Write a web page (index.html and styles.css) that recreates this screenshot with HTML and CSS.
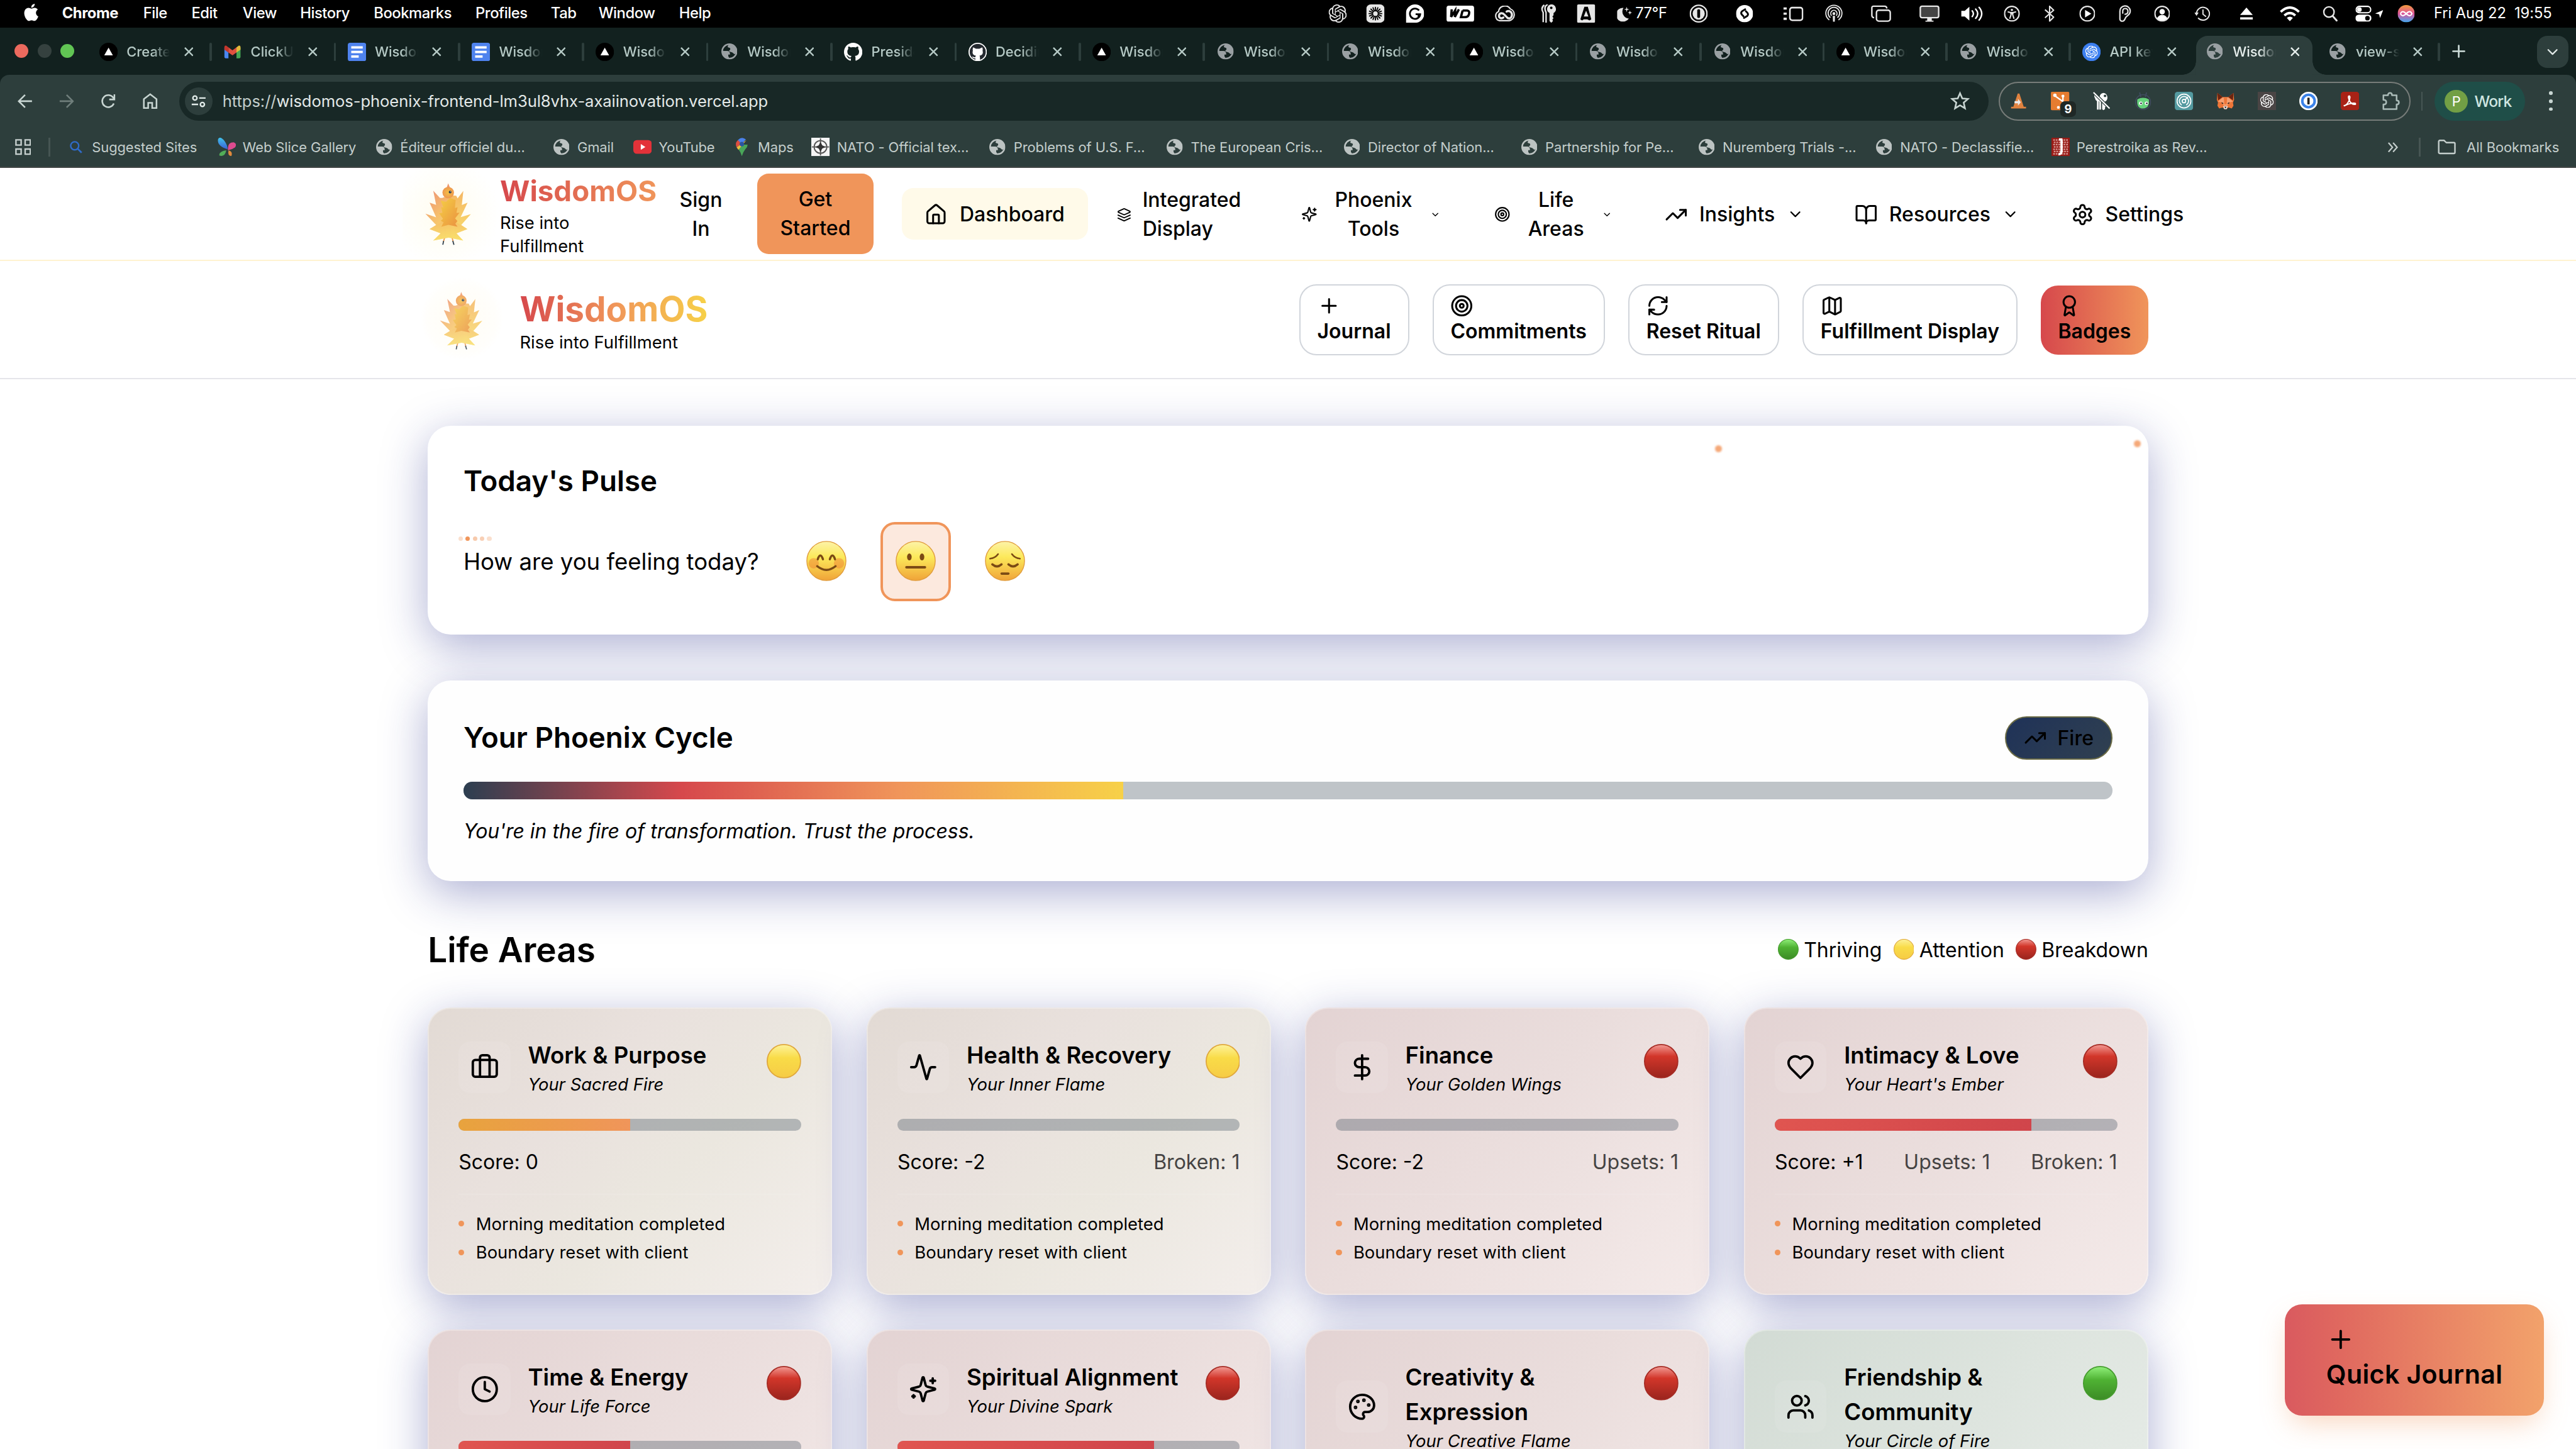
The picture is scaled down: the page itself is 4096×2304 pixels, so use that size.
FILE: index.html
```html
<!DOCTYPE html>
<html lang="en">
<head>
<meta charset="utf-8">
<title>WisdomOS</title>
<link rel="stylesheet" href="styles.css">
</head>
<body>
<svg class="sprite" aria-hidden="true">
  <defs>
    <linearGradient id="g-feather" x1="0" y1="0" x2=".7" y2="1"><stop offset="0" stop-color="#ec8f78"/><stop offset=".5" stop-color="#f6bd6c"/><stop offset="1" stop-color="#f9e06c"/></linearGradient>
    <linearGradient id="g-featherR" x1="0" y1="0" x2="0" y2="1"><stop offset="0" stop-color="#f5b765"/><stop offset="1" stop-color="#f9e06c"/></linearGradient>
    <linearGradient id="g-breast" x1="0" y1="0" x2="1" y2="1"><stop offset="0" stop-color="#f5cf45"/><stop offset="1" stop-color="#ea9040"/></linearGradient>
    <radialGradient id="g-head"><stop offset="0" stop-color="#f4c044"/><stop offset="1" stop-color="#ee9850"/></radialGradient>
    <linearGradient id="g-face" x1="0" y1="0" x2="0" y2="1"><stop offset="0" stop-color="#fdf3a8"/><stop offset=".4" stop-color="#fce95a"/><stop offset="1" stop-color="#f0a338"/></linearGradient>
    <linearGradient id="g-red" x1="0" y1="0" x2="0" y2="1"><stop offset="0" stop-color="#f29a94"/><stop offset=".35" stop-color="#d2362a"/><stop offset="1" stop-color="#99241d"/></linearGradient>
    <linearGradient id="g-yellow" x1="0" y1="0" x2="0" y2="1"><stop offset="0" stop-color="#fdf29a"/><stop offset=".4" stop-color="#f9dc48"/><stop offset="1" stop-color="#f6cb45"/></linearGradient>
    <linearGradient id="g-green" x1="0" y1="0" x2="0" y2="1"><stop offset="0" stop-color="#90f07a"/><stop offset=".4" stop-color="#4fb233"/><stop offset="1" stop-color="#3c8b26"/></linearGradient>
    <linearGradient id="g-siri" x1="0" y1="0" x2="0" y2="1"><stop offset="0" stop-color="#f39b3c"/><stop offset=".5" stop-color="#e0569c"/><stop offset="1" stop-color="#3fa9f0"/></linearGradient>
    <linearGradient id="g-wing" x1="0" y1="0" x2="0" y2="1"><stop offset="0" stop-color="#41c3ea"/><stop offset="1" stop-color="#3a5fd8"/></linearGradient>
  </defs>
  <symbol id="apple" viewBox="0 0 24 24"><path fill="#fff" d="M12.152 6.896c-.948 0-2.415-1.078-3.96-1.04-2.04.027-3.91 1.183-4.961 3.014-2.117 3.675-.546 9.103 1.519 12.09 1.013 1.454 2.208 3.09 3.792 3.039 1.52-.065 2.09-.987 3.935-.987 1.831 0 2.35.987 3.96.948 1.637-.026 2.676-1.48 3.676-2.948 1.156-1.688 1.636-3.325 1.662-3.415-.039-.013-3.182-1.221-3.22-4.857-.026-3.04 2.48-4.494 2.597-4.559-1.429-2.09-3.623-2.324-4.39-2.376-2-.156-3.675 1.09-4.61 1.09zM15.53 3.83c.843-1.012 1.4-2.427 1.245-3.83-1.207.052-2.662.805-3.532 1.818-.78.896-1.454 2.338-1.273 3.714 1.338.104 2.715-.688 3.559-1.701"/></symbol>
  <symbol id="openai" viewBox="0 0 24 24"><path fill="currentColor" d="M22.2819 9.8211a5.9847 5.9847 0 0 0-.5157-4.9108 6.0462 6.0462 0 0 0-6.5098-2.9A6.0651 6.0651 0 0 0 4.9807 4.1818a5.9847 5.9847 0 0 0-3.9977 2.9 6.0462 6.0462 0 0 0 .7427 7.0966 5.98 5.98 0 0 0 .511 4.9107 6.051 6.051 0 0 0 6.5146 2.9001A5.9847 5.9847 0 0 0 13.2599 24a6.0557 6.0557 0 0 0 5.7718-4.2058 5.9894 5.9894 0 0 0 3.9977-2.9001 6.0557 6.0557 0 0 0-.7475-7.0729zm-9.022 12.6081a4.4755 4.4755 0 0 1-2.8764-1.0408l.1419-.0804 4.7783-2.7582a.7948.7948 0 0 0 .3927-.6813v-6.7369l2.02 1.1686a.071.071 0 0 1 .038.052v5.5826a4.504 4.504 0 0 1-4.4945 4.4944zm-9.6607-4.1254a4.4708 4.4708 0 0 1-.5346-3.0137l.142.0852 4.783 2.7582a.7712.7712 0 0 0 .7806 0l5.8428-3.3685v2.3324a.0804.0804 0 0 1-.0332.0615L9.74 19.9502a4.4992 4.4992 0 0 1-6.1408-1.6464zM2.3408 7.8956a4.485 4.485 0 0 1 2.3655-1.9728V11.6a.7664.7664 0 0 0 .3879.6765l5.8144 3.3543-2.0201 1.1685a.0757.0757 0 0 1-.071 0l-4.8303-2.7865A4.504 4.504 0 0 1 2.3408 7.872zm16.5963 3.8558L13.1038 8.364 15.1192 7.2a.0757.0757 0 0 1 .071 0l4.8303 2.7913a4.4944 4.4944 0 0 1-.6765 8.1042v-5.6772a.79.79 0 0 0-.407-.667zm2.0107-3.0231l-.142-.0852-4.7735-2.7818a.7759.7759 0 0 0-.7854 0L9.409 9.2297V6.8974a.0662.0662 0 0 1 .0284-.0615l4.8303-2.7866a4.4992 4.4992 0 0 1 6.6802 4.66zM8.3065 12.863l-2.02-1.1638a.0804.0804 0 0 1-.038-.0567V6.0742a4.4992 4.4992 0 0 1 7.3757-3.4537l-.142.0805L8.704 5.459a.7948.7948 0 0 0-.3927.6813zm1.0976-2.3654l2.602-1.4998 2.6069 1.4998v2.9994l-2.5974 1.4997-2.6067-1.4997Z"/></symbol>
  <symbol id="m-burst" viewBox="0 0 32 32"><rect width="32" height="32" rx="8" fill="#e6e6e6"/><path stroke="#000" stroke-width="2" stroke-linecap="round" d="M16 5v7M16 20v7M5 16h7M20 16h7M8.200 8.200l5 5M18.800 18.800l5 5M23.800 8.200l-5 5M13.200 18.800l-5 5M11.800 5.800l2.700 6.500M17.500 19.700l2.700 6.500M20.200 5.800l-2.700 6.500M14.500 19.700l-2.700 6.500M5.800 11.800l6.500 2.700M19.700 17.500l6.500 2.700M26.200 11.800l-6.500 2.700M12.300 17.500l-6.500 2.700"/><circle cx="16" cy="16" r="4" fill="#e6e6e6"/></symbol>
  <symbol id="m-g" viewBox="0 0 32 32"><path fill="#fff" d="M16 0a16 16 0 1 1 0 32H0V16A16 16 0 0 1 16 0z"/><path fill="none" stroke="#000" stroke-width="3" d="M23 10.500a9 9 0 1 0 2 6.500h-8M22 17v6"/></symbol>
  <symbol id="m-wd" viewBox="0 0 48 28"><rect width="48" height="28" rx="4" fill="#fff"/><path fill="none" stroke="#000" stroke-width="4" d="M9 6.500l-1 13 7-11-.5 11 7-13M28 8.500h8q5 1 3 6.500-1.500 5-7 5h-7l3-11.500"/></symbol>
  <symbol id="m-cc" viewBox="0 0 40 30"><path fill="none" stroke="#e6e6e6" stroke-width="2.500" d="M10 28a9 9 0 0 1-2-17A12 12 0 0 1 30 6a11.500 11.500 0 0 1-2 22z"/><path fill="none" stroke="#e6e6e6" stroke-width="4" stroke-linecap="round" d="M17 22c-3 3-9 1-8-4s7-5 10-1l6 6c4 2 8-1 8-6s-5-9-10-6"/></symbol>
  <symbol id="m-keys" viewBox="0 0 32 32"><path fill="#e6e6e6" d="M21 0a8 8 0 0 1 4 15v4l-2 2 2 3-2 2 1 3-3 3-3-3V15A8 8 0 0 1 21 0z"/><circle cx="21" cy="6" r="2.200" fill="#000"/><path fill="none" stroke="#e6e6e6" stroke-width="2.600" d="M15 0Q7 4 12 14v18M9 1Q2 6 7 14v17"/></symbol>
  <symbol id="m-a" viewBox="0 0 32 32"><rect width="32" height="32" rx="3" fill="#e6e6e6"/><path d="M13 4h6l6 22-3 2-4-2h-6l-3 2-3-2z"/><path fill="#e6e6e6" d="M16 11l4 10h-8z"/></symbol>
  <symbol id="m-moon" viewBox="0 0 28 30"><path fill="#e6e6e6" d="M11 4a13 13 0 1 0 10 20A13 13 0 0 1 11 4z"/><path fill="#e6e6e6" d="M17 2l1 4 4 1-4 1-1 4-1-4-4-1 4-1zM23 9l1 3 3 1-3 1-1 3-1-3-3-1 3-1z"/></symbol>
  <symbol id="m-1p" viewBox="0 0 32 32"><circle cx="16" cy="16" r="14.500" fill="none" stroke="#e6e6e6" stroke-width="2.600"/><circle cx="16" cy="16" r="10.500" fill="#e6e6e6"/><rect x="13.500" y="8.500" width="5" height="15" rx="2" fill="#000"/></symbol>
  <symbol id="m-shz" viewBox="0 0 28 28"><circle cx="14" cy="14" r="14" fill="#fff"/><path fill="none" stroke="#000" stroke-width="3" stroke-linecap="round" d="M15 7l-5 3q-3 3 0 6l2 2M13 21l5-3q3-3 0-6l-2-2"/></symbol>
  <symbol id="m-list" viewBox="0 0 36 28"><rect x="11.500" y="3.500" width="22" height="22" rx="4" fill="none" stroke="#e6e6e6" stroke-width="2.800"/><path stroke="#e6e6e6" stroke-width="4" d="M0 5h6M0 14h6M0 23h6"/></symbol>
  <symbol id="m-air" viewBox="0 0 32 32"><g fill="none" stroke="#e6e6e6" stroke-width="2"><path d="M8 27a14 14 0 1 1 16 0"/><path d="M10 23a10 10 0 1 1 12 0"/><path d="M12 19.500a5.500 5.500 0 1 1 8 0"/></g><circle cx="16" cy="16" r="2.500" fill="#e6e6e6"/><path fill="#e6e6e6" d="M14 20h4l-.500 10h-3z"/></symbol>
  <symbol id="m-stack" viewBox="0 0 36 30"><path fill="none" stroke="#e6e6e6" stroke-width="2.600" d="M6 22a4 4 0 0 1-4-4V5q0-3 3-3h19q4 0 4 4"/><rect x="10" y="9" width="24" height="19" rx="4" fill="none" stroke="#e6e6e6" stroke-width="2.600"/></symbol>
  <symbol id="m-disp" viewBox="0 0 36 30"><rect x="2" y="2" width="32" height="20" rx="3" fill="#444" stroke="#e6e6e6" stroke-width="2.600"/><path fill="#e6e6e6" d="M14 22h8v5h3v2H11v-2h3z"/></symbol>
  <symbol id="m-vol" viewBox="0 0 40 28"><path fill="#fff" d="M1 9h6l8-7v24l-8-7H1z"/><path fill="none" stroke="#fff" stroke-width="2.600" stroke-linecap="round" d="M20 9q4 5 0 10M26 6q7 8 0 16M32 3q9 11 0 22"/></symbol>
  <symbol id="m-acc" viewBox="0 0 28 28"><circle cx="14" cy="14" r="12.700" fill="none" stroke="#e6e6e6" stroke-width="2.400"/><circle cx="14" cy="7.500" r="2" fill="#e6e6e6"/><path fill="none" stroke="#e6e6e6" stroke-width="2.200" stroke-linecap="round" d="M7.500 11l4.500 1h4l4.500-1M12.500 12v4l-2 6M15.500 12v4l2 6M12 14h4"/></symbol>
  <symbol id="m-bt" viewBox="0 0 20 28"><path fill="none" stroke="#e6e6e6" stroke-width="2.300" stroke-linejoin="round" d="M2 7l15 13-7 7V1l7 7L2 21"/></symbol>
  <symbol id="m-play" viewBox="0 0 28 28"><circle cx="14" cy="14" r="12.700" fill="none" stroke="#e6e6e6" stroke-width="2.400"/><path fill="#fff" d="M10 7.500l11 6.500-11 6.500z"/></symbol>
  <symbol id="m-ear" viewBox="0 0 24 30"><path fill="none" stroke="#e6e6e6" stroke-width="2.400" stroke-linecap="round" d="M3 25V11A9 9 0 0 1 21 10c0 9-8 8-9 14q-2 5-6 4q-3-1-3-4M8 14q-1-8 4-8t5 5-5 5"/></symbol>
  <symbol id="m-user" viewBox="0 0 28 28"><circle cx="14" cy="14" r="12.700" fill="none" stroke="#e6e6e6" stroke-width="2.400"/><circle cx="14" cy="10.500" r="4.700" fill="#fff"/><path fill="#fff" d="M5 22q3-6 9-6t9 6q-4 4-9 4t-9-4z"/></symbol>
  <symbol id="m-time" viewBox="0 0 30 28"><path fill="none" stroke="#e6e6e6" stroke-width="2.300" stroke-linecap="round" d="M4 14a12 12 0 1 1 3.500 8.500M16 7v8l5 4"/><path fill="#e6e6e6" d="M0 12h8l-4 6z"/></symbol>
  <symbol id="m-eject" viewBox="0 0 24 24"><path fill="#fff" d="M12 1l11 13H1zM1 18h22v4H1z"/></symbol>
  <symbol id="m-wifi" viewBox="0 0 34 26"><g fill="none" stroke="#fff" stroke-width="4"><path d="M2 10q15-14 30 0"/><path d="M8 16q9-8 18 0"/></g><path fill="#fff" d="M12 20q5-4 10 0l-5 5.500z"/></symbol>
  <symbol id="m-search" viewBox="0 0 28 28"><circle cx="12" cy="11" r="9" fill="none" stroke="#e6e6e6" stroke-width="2.600"/><path stroke="#e6e6e6" stroke-width="3.200" stroke-linecap="round" d="M18.500 18l7 8"/></symbol>
  <symbol id="m-ctl" viewBox="0 0 28 28"><rect x="1.300" y="1.300" width="25.400" height="11" rx="5.500" fill="none" stroke="#fff" stroke-width="2.400"/><circle cx="7" cy="6.800" r="4" fill="#fff"/><rect y="15.500" width="28" height="12.500" rx="6.200" fill="#fff"/><circle cx="21" cy="21.800" r="4" fill="#000"/></symbol>
  <symbol id="m-loc" viewBox="0 0 14 14"><path fill="#fff" d="M14 0L8.500 14 7 7.500 0 6z"/></symbol>
  <symbol id="m-siri" viewBox="0 0 30 30"><circle cx="15" cy="15" r="15" fill="url(#g-siri)"/><path fill="none" stroke="#fff" stroke-width="2.200" d="M5 15q3-7 10 0t10 0q-3-7-10 0t-10 0"/></symbol>
  <symbol id="f-vercel" viewBox="0 0 32 32"><circle cx="16" cy="16" r="16"/><path fill="#fff" d="M16 8.500l7.500 13.500h-15z"/></symbol>
  <symbol id="f-gmail" viewBox="0 0 32 24"><path fill="#4a86f0" d="M2 4v17q0 2 2 2h5V10z"/><path fill="#45a655" d="M30 4v17q0 2-2 2h-5V10z"/><path fill="#e2b93a" d="M23 4l4-3q3-1 3 3v4l-7 5z"/><path fill="#c5362c" d="M2 4q0-4 3-3l4 3v9L2 8z"/><path fill="#e0503f" d="M9 4l7 5 7-5v9l-7 5-7-5z"/></symbol>
  <symbol id="f-docs" viewBox="0 0 32 32"><rect width="32" height="32" rx="4" fill="#4f83ee"/><path stroke="#fff" stroke-width="4" d="M6 8h20M6 16h20M6 24h13"/></symbol>
  <symbol id="globe" viewBox="0 0 28 28"><circle cx="14" cy="14" r="12.600" fill="none" stroke="currentColor" stroke-width="2.800"/><path fill="currentColor" d="M1 13h9c3.500 0 5 2 5 5v1.500h-3v3l3 4.500C7 28 1 22 1 13zM14 1c-1 2-3 2.500-3 4.500 0 2.500 4.500 1 4.500 4 0 2.500-2 2-2 3.500 0 2 4 1.500 6 3 2 1.200 2 2.800 4 2.500 2-.500 3-2.500 3.500-4.500C27 7 21 1 14 1z"/></symbol>
  <symbol id="f-github" viewBox="0 0 16 16"><path fill="#fff" d="M8 0C3.580 0 0 3.580 0 8c0 3.540 2.290 6.530 5.470 7.590.4.070.55-.17.55-.38 0-.19-.01-.82-.01-1.490-2.010.37-2.530-.49-2.690-.94-.09-.23-.48-.94-.82-1.130-.28-.15-.68-.52-.01-.53.63-.01 1.080.58 1.230.82.720 1.210 1.870.87 2.330.66.070-.52.280-.87.510-1.070-1.780-.2-3.640-.89-3.640-3.950 0-.87.310-1.590.820-2.150-.08-.2-.36-1.020.080-2.120 0 0 .67-.21 2.200.82.640-.18 1.320-.27 2-.27s1.360.09 2 .27c1.530-1.040 2.200-.82 2.200-.82.440 1.100.160 1.920.080 2.120.510.560.820 1.270.820 2.150 0 3.070-1.870 3.750-3.650 3.950.29.250.54.730.54 1.480 0 1.070-.01 1.930-.01 2.200 0 .21.15.46.55.38A8.010 8.010 0 0 0 16 8c0-4.420-3.580-8-8-8z"/></symbol>
  <symbol id="f-githubdark" viewBox="0 0 32 32"><circle cx="16" cy="16" r="15" fill="#24292f" stroke="#fff" stroke-width="2"/><path fill="#fff" d="M8 8l5 2.500h6L24 8q1.500 4 .500 6c1.500 5-1 8-5.500 8.500 1 1 1 3 1 8.500h-8v-4c-4 1-5-2-6-3 3-.5 3 2 6 1q0-1.500 1-2.500C8.500 22 6 19 7.500 14q-1-2 .500-6z"/></symbol>
  <symbol id="f-api" viewBox="0 0 32 32"><circle cx="16" cy="16" r="16" fill="#3c7ff0"/><svg x="5" y="5" width="22" height="22" color="#fff"><use href="#openai"/></svg></symbol>
  <symbol id="x" viewBox="0 0 16 16"><path stroke="currentColor" stroke-width="2.600" d="M1 1l14 14M15 1L1 15"/></symbol>
  <symbol id="plus" viewBox="0 0 24 24"><path fill="none" stroke="currentColor" stroke-width="2" stroke-linecap="round" d="M5 12h14M12 5v14"/></symbol>
  <symbol id="chev" viewBox="0 0 24 24"><path fill="none" stroke="currentColor" stroke-width="2" stroke-linecap="round" stroke-linejoin="round" d="M6 9l6 6 6-6"/></symbol>
  <symbol id="back" viewBox="0 0 26 24"><path fill="none" stroke="currentColor" stroke-width="2.800" d="M13 1L2 12l11 11M2 12h23"/></symbol>
  <symbol id="reload" viewBox="0 0 26 26"><path fill="none" stroke="currentColor" stroke-width="2.800" d="M23 17A10.500 10.500 0 1 1 22 7l2 3M24 1v9h-9"/></symbol>
  <symbol id="home" viewBox="0 0 26 28"><path fill="none" stroke="currentColor" stroke-width="2.800" d="M2 10.500L13 2l11 8.500V26h-7.500v-9h-7v9H2z"/></symbol>
  <symbol id="tune" viewBox="0 0 28 24"><g fill="none" stroke="#e2ebe9" stroke-width="2.800"><circle cx="7" cy="6" r="3.800"/><circle cx="21" cy="18" r="3.800"/><path d="M15 6h12M1 18h12"/></g></symbol>
  <symbol id="star" viewBox="0 0 24 24"><path fill="none" stroke="currentColor" stroke-width="2" d="M12 2.500l2.800 6.400 7 .600-5.300 4.600 1.600 6.900L12 17.300 5.900 21l1.600-6.900L2.200 9.500l7-.600z"/></symbol>
  <symbol id="e-vlc" viewBox="0 0 32 32"><path fill="#e0823f" d="M14.500 3h3L25 26h4v3H3v-3h4z"/><path fill="#e9e9e9" d="M9 16h6v-4l5 6-5 6v-4H9z"/></symbol>
  <symbol id="e-hub" viewBox="0 0 44 48"><rect width="32" height="32" rx="2" fill="#e67c30"/><path fill="none" stroke="#fff" stroke-width="2.600" d="M7 7l14 10V8"/><circle cx="7" cy="6" r="3" fill="#fff"/><circle cx="21" cy="7.500" r="2.600" fill="#fff"/><circle cx="13" cy="27" r="2.500" fill="#fff"/></symbol>
  <symbol id="e-keys" viewBox="0 0 32 32"><path fill="#fff" d="M19 2a8 8 0 0 1 3 15v4l2 3-2 3v3l-3 2-2-2V17A8 8 0 0 1 19 2zM5 12q0 3 3 4v15h3V17l1-1v15h3V14L4 3q-2 4 1 9z"/><circle cx="22" cy="7" r="2.200" fill="#2d3e3c"/><path stroke="#2d3e3c" stroke-width="5" d="M2 1l28 28"/><path stroke="#fff" stroke-width="2.400" d="M2 1l28 28"/></symbol>
  <symbol id="e-bot" viewBox="0 0 32 32"><circle cx="16" cy="18" r="13" fill="none" stroke="#414c60" stroke-width="1.600"/><path stroke="#414c60" stroke-width="2" d="M10 1l2 8M22 1l-2 8"/><path fill="#68d47e" d="M6 13q10-5 20 0 2 15-10 16Q4 29 6 13z"/><circle cx="12" cy="20" r="3" fill="#fff"/><circle cx="22" cy="20" r="3" fill="#fff"/><circle cx="12.500" cy="20" r="1.500" fill="#334"/><circle cx="22.500" cy="20" r="1.500" fill="#334"/></symbol>
  <symbol id="e-gauge" viewBox="0 0 32 32"><rect width="32" height="32" rx="5" fill="#549aa0"/><g fill="none" stroke="#fff" stroke-width="1.900"><circle cx="16" cy="16" r="12"/><path d="M12 23a8 8 0 1 1 8 0"/><circle cx="16" cy="16" r="3"/><path d="M18 14l5-5"/></g></symbol>
  <symbol id="e-fox" viewBox="0 0 32 32"><path fill="#ee7638" d="M2 2l9 7h10l9-7 1 12-2 5 1 5-3 5-6-2-3 3h-4l-3-3-6 2-3-5 1-5-2-5z"/><path fill="#6b2410" d="M2 2l9 7-8 6zM30 2l-9 7 8 6z"/><path fill="#f6a071" d="M3 17l8-7h10l8 7-8 2-2 5h-6l-2-5z"/><path fill="#ee7638" d="M13 10h6l-1 12h-4z"/><path fill="#eee" d="M12 25h8l-2 5h-4z"/><path fill="#222" d="M14 26h4l-2 3zM9 18l4 2-3 1zM23 18l-4 2 3 1z"/></symbol>
  <symbol id="e-gpt" viewBox="0 0 32 32"><rect width="32" height="32" fill="#4a4545"/><svg x="4" y="4" width="24" height="24" color="#fff"><use href="#openai"/></svg></symbol>
  <symbol id="e-1p" viewBox="0 0 32 32"><circle cx="16" cy="16" r="16" fill="#fff"/><circle cx="16" cy="16" r="13" fill="#3b82e8"/><circle cx="16" cy="16" r="8.500" fill="#fff"/><rect x="14" y="10" width="4" height="12" rx="1" fill="#222"/></symbol>
  <symbol id="e-pdf" viewBox="0 0 32 32"><rect width="32" height="32" rx="5" fill="#a92216"/><path fill="none" stroke="#fff" stroke-width="2.200" d="M6 24q5-1 9-10 2-7-.500-7t0 7q3 8 10 8 2-.500.500-2-6-1-16 3-3 2-3 1z"/></symbol>
  <symbol id="e-puzzle" viewBox="0 0 32 32"><path fill="none" stroke="#a9bab7" stroke-width="2.800" stroke-linejoin="round" d="M3 6h8q0-4 3.500-4T18 6h8v9q4 0 4 3.500T26 22v8H3v-8q5 0 5-4t-5-4z"/></symbol>
  <symbol id="b-grid" viewBox="0 0 28 28"><g fill="none" stroke="#c6d0ce" stroke-width="2.600"><path d="M1.500 1.500h9v9h-9zM17.500 1.500h9v9h-9zM1.500 17.500h9v9h-9zM17.500 17.500h9v9h-9z"/></g></symbol>
  <symbol id="b-search" viewBox="0 0 32 32"><circle cx="14" cy="14" r="7" fill="none" stroke="#2f6bc8" stroke-width="2.600"/><path stroke="#2f6bc8" stroke-width="3" d="M19 19l7 7"/></symbol>
  <symbol id="b-fly" viewBox="0 0 32 32"><path fill="url(#g-wing)" d="M17 20Q-2 14 1 2 5-4 13 7q5 8 4 13z"/><path fill="#dd4b8f" d="M18 18q0-10 10-10 7 3 2 9-5 4-12 5z"/><path fill="#52ad58" d="M15 22Q2 24 3 31q10 3 12-9z"/><path fill="#e08a3c" d="M19 22q8 2 5 10-7 0-5-10z"/></symbol>
  <symbol id="b-yt" viewBox="0 0 32 24"><rect width="32" height="24" rx="6" fill="#e33239"/><path fill="#fff" d="M13 7l8 5-8 5z"/></symbol>
  <symbol id="b-map" viewBox="0 0 24 32"><path fill="#49a659" d="M2 12q0 4 4 8 4 5 6 12 2-7 6-12 4-4 4-8z"/><path fill="#4b82ea" d="M5 4Q12-3 19 3l-8 9z"/><path fill="#dd4d40" d="M5 4l6 6-8 7Q-1 10 5 4z"/><path fill="#efbb3e" d="M3 17L20 4 6 21z"/><circle cx="12" cy="11" r="4" fill="#2b55a0"/></symbol>
  <symbol id="b-nato" viewBox="0 0 32 32"><rect width="32" height="32" fill="#f5f5f5"/><g fill="none" stroke="#555" stroke-width="2"><circle cx="16" cy="16" r="11"/><path d="M16 1v30M1 16h30"/></g><path fill="#333" d="M16 7l3 6 6 3-6 3-3 6-3-6-6-3 6-3z"/></symbol>
  <symbol id="b-j" viewBox="0 0 32 32"><rect width="32" height="32" fill="#971a15"/><path stroke="#d79a96" stroke-width="2.400" stroke-dasharray="3 1.500" d="M3 4h26M4 8h25M3 12h26M4 16h25M3 20h26M4 24h25M3 28h26"/><path fill="none" stroke="#fff" stroke-width="4" d="M13 3h6M17.500 3v20q0 6-5.500 5.500"/></symbol>
  <symbol id="b-more" viewBox="0 0 20 18"><path fill="none" stroke="currentColor" stroke-width="2.400" d="M2 1l7 8-7 8M10 1l7 8-7 8"/></symbol>
  <symbol id="b-folder" viewBox="0 0 34 28"><path fill="none" stroke="currentColor" stroke-width="2.800" stroke-linejoin="round" d="M2 4q0-2 2-2h8l4 4h14q2 0 2 2v16q0 2-2 2H4q-2 0-2-2z"/></symbol>

  <symbol id="phoenix" viewBox="0 0 360 450">
    <path fill="none" stroke="#ee9850" stroke-width="6" d="M146 336l-8 26M182 336l7 26"/><path fill="none" stroke="#33424f" stroke-width="6" d="M139 358l-4 20M187 358l6 20"/>
    <path fill="url(#g-featherR)" d="M165 120l40 2 7 14 30-39-8 74 30-13-36 76 53-16-50 57 32 21-57 22 35 38-76-16z"/>
    <path fill="url(#g-feather)" d="M165 120l-33 14-12 0-35-38 15 74-34-12 34 77-56-19 56 59-34 21 58 22-39 38 80-16 40 0z"/>
    <path fill="url(#g-featherR)" d="M66 296l100-60 97 60-57 22 35 38-75-15-81 15 38-38z" opacity=".75"/>
    <path fill="url(#g-breast)" d="M124 148l28 6 20-20 30 10-4 42 14-4-6 30 16-1-23 29 12 14-11 14 12 16-48-10-37 10 12-23-15-8 12-10-20-29 17-3-7-30 12 2z"/>
    <path fill="#ef9a6c" d="M163 57l14 34h-26z"/><circle cx="163" cy="106" r="30" fill="url(#g-head)"/><circle cx="173" cy="103" r="7" fill="#2c3e50"/><circle cx="175" cy="101" r="2" fill="#e8e8e8"/>
  </symbol>

  <symbol id="l-home" viewBox="0 0 24 24"><path d="M15 21v-8a1 1 0 0 0-1-1h-4a1 1 0 0 0-1 1v8"/><path d="M3 10a2 2 0 0 1 .709-1.528l7-5.999a2 2 0 0 1 2.582 0l7 5.999A2 2 0 0 1 21 10v9a2 2 0 0 1-2 2H5a2 2 0 0 1-2-2z"/></symbol>
  <symbol id="l-layers" viewBox="0 0 24 24"><path d="m12.830 2.180a2 2 0 0 0-1.660 0L2.600 6.080a1 1 0 0 0 0 1.830l8.580 3.910a2 2 0 0 0 1.660 0l8.580-3.900a1 1 0 0 0 0-1.830Z"/><path d="m22 17.650-9.170 4.160a2 2 0 0 1-1.660 0L2 17.650"/><path d="m22 12.650-9.170 4.160a2 2 0 0 1-1.660 0L2 12.650"/></symbol>
  <symbol id="l-sparkles" viewBox="0 0 24 24"><path d="M9.937 15.500A2 2 0 0 0 8.500 14.063l-6.135-1.582a.5.5 0 0 1 0-.962L8.500 9.936A2 2 0 0 0 9.937 8.500l1.582-6.135a.5.5 0 0 1 .963 0L14.063 8.500A2 2 0 0 0 15.500 9.937l6.135 1.581a.5.5 0 0 1 0 .964L15.500 14.063a2 2 0 0 0-1.437 1.437l-1.582 6.135a.5.5 0 0 1-.963 0z"/><path d="M20 3v4M22 5h-4M4 17v2M5 18H3"/></symbol>
  <symbol id="l-target" viewBox="0 0 24 24"><circle cx="12" cy="12" r="10"/><circle cx="12" cy="12" r="6"/><circle cx="12" cy="12" r="2"/></symbol>
  <symbol id="l-trend" viewBox="0 0 24 24"><path d="M22 7l-8.500 8.500-5-5L2 17"/><path d="M16 7h6v6"/></symbol>
  <symbol id="l-book" viewBox="0 0 24 24"><path d="M12 7v14"/><path d="M3 18a1 1 0 0 1-1-1V4a1 1 0 0 1 1-1h5a4 4 0 0 1 4 4 4 4 0 0 1 4-4h5a1 1 0 0 1 1 1v13a1 1 0 0 1-1 1h-6a3 3 0 0 0-3 3 3 3 0 0 0-3-3z"/></symbol>
  <symbol id="l-gear" viewBox="0 0 24 24"><path d="M12.220 2h-.44a2 2 0 0 0-2 2v.18a2 2 0 0 1-1 1.730l-.43.250a2 2 0 0 1-2 0l-.15-.08a2 2 0 0 0-2.730.73l-.22.38a2 2 0 0 0 .73 2.730l.15.100a2 2 0 0 1 1 1.720v.51a2 2 0 0 1-1 1.740l-.15.090a2 2 0 0 0-.73 2.730l.22.380a2 2 0 0 0 2.730.730l.15-.08a2 2 0 0 1 2 0l.43.250a2 2 0 0 1 1 1.730V20a2 2 0 0 0 2 2h.44a2 2 0 0 0 2-2v-.18a2 2 0 0 1 1-1.730l.43-.25a2 2 0 0 1 2 0l.15.080a2 2 0 0 0 2.730-.73l.22-.39a2 2 0 0 0-.73-2.730l-.15-.08a2 2 0 0 1-1-1.740v-.5a2 2 0 0 1 1-1.740l.15-.09a2 2 0 0 0 .73-2.730l-.22-.38a2 2 0 0 0-2.730-.73l-.15.080a2 2 0 0 1-2 0l-.43-.25a2 2 0 0 1-1-1.730V4a2 2 0 0 0-2-2z"/><circle cx="12" cy="12" r="3"/></symbol>
  <symbol id="l-refresh" viewBox="0 0 24 24"><path d="M3 12a9 9 0 0 1 9-9 9.750 9.750 0 0 1 6.740 2.740L21 8"/><path d="M21 3v5h-5"/><path d="M21 12a9 9 0 0 1-9 9 9.750 9.750 0 0 1-6.740-2.740L3 16"/><path d="M8 16H3v5"/></symbol>
  <symbol id="l-map" viewBox="0 0 24 24"><path d="M14.106 5.553a2 2 0 0 0 1.788 0l3.659-1.830A1 1 0 0 1 21 4.619v12.764a1 1 0 0 1-.553.894l-4.553 2.277a2 2 0 0 1-1.788 0l-4.212-2.106a2 2 0 0 0-1.788 0l-3.659 1.830A1 1 0 0 1 3 19.381V6.618a1 1 0 0 1 .553-.894l4.553-2.277a2 2 0 0 1 1.788 0z"/><path d="M15 5.764v15M9 3.236v15"/></symbol>
  <symbol id="l-award" viewBox="0 0 24 24"><path d="m15.477 12.890 1.515 8.526a.5.5 0 0 1-.81.47l-3.580-2.687a1 1 0 0 0-1.197 0l-3.586 2.686a.5.5 0 0 1-.81-.469l1.514-8.526"/><circle cx="12" cy="8" r="6"/></symbol>
  <symbol id="l-bag" viewBox="0 0 24 24"><path d="M16 20V4a2 2 0 0 0-2-2h-4a2 2 0 0 0-2 2v16"/><rect x="2" y="6" width="20" height="14" rx="2"/></symbol>
  <symbol id="l-pulse" viewBox="0 0 24 24"><path d="M22 12h-2.480a2 2 0 0 0-1.930 1.460l-2.350 8.360a.25.25 0 0 1-.48 0L9.240 2.180a.25.25 0 0 0-.48 0l-2.350 8.360A2 2 0 0 1 4.490 12H2"/></symbol>
  <symbol id="l-dollar" viewBox="0 0 24 24"><path d="M12 2v20M17 5H9.500a3.500 3.500 0 0 0 0 7h5a3.500 3.500 0 0 1 0 7H6"/></symbol>
  <symbol id="l-heart" viewBox="0 0 24 24"><path d="M19 14c1.490-1.460 3-3.210 3-5.500A5.500 5.500 0 0 0 16.500 3c-1.760 0-3 .5-4.500 2-1.500-1.500-2.740-2-4.500-2A5.500 5.500 0 0 0 2 8.500c0 2.300 1.500 4.050 3 5.500l7 7Z"/></symbol>
  <symbol id="l-clock" viewBox="0 0 24 24"><circle cx="12" cy="12" r="10"/><path d="M12 6v6l4 2"/></symbol>
  <symbol id="l-palette" viewBox="0 0 24 24"><g fill="#000"><circle cx="13.500" cy="6.500" r=".5"/><circle cx="17.500" cy="10.500" r=".5"/><circle cx="8.500" cy="7.500" r=".5"/><circle cx="6.500" cy="12.500" r=".5"/></g><path d="M12 2C6.500 2 2 6.500 2 12s4.500 10 10 10c.926 0 1.648-.746 1.648-1.688 0-.437-.18-.835-.437-1.125-.29-.289-.438-.652-.438-1.125a1.640 1.640 0 0 1 1.668-1.668h1.996c3.051 0 5.555-2.503 5.555-5.554C21.965 6.012 17.461 2 12 2z"/></symbol>
  <symbol id="l-users" viewBox="0 0 24 24"><path d="M16 21v-2a4 4 0 0 0-4-4H6a4 4 0 0 0-4 4v2"/><circle cx="9" cy="7" r="4"/><path d="M22 21v-2a4 4 0 0 0-3-3.870M16 3.130a4 4 0 0 1 0 7.750"/></symbol>

  <symbol id="dot-red" viewBox="0 0 60 60"><circle cx="30" cy="30" r="29" fill="url(#g-red)" stroke="#a52b24" stroke-width="2"/></symbol>
  <symbol id="dot-yellow" viewBox="0 0 60 60"><circle cx="30" cy="30" r="29" fill="url(#g-yellow)" stroke="#e0a83c" stroke-width="2"/></symbol>
  <symbol id="dot-green" viewBox="0 0 60 60"><circle cx="30" cy="30" r="29" fill="url(#g-green)" stroke="#469c2e" stroke-width="2"/></symbol>
  <symbol id="em-happy" viewBox="0 0 70 70"><circle cx="35" cy="35" r="34" fill="url(#g-face)" stroke="#e09c3c" stroke-width="1.500"/><circle cx="13" cy="39" r="9" fill="#ee7a30" opacity=".45"/><circle cx="57" cy="39" r="9" fill="#ee7a30" opacity=".45"/><path fill="none" stroke="#7b4a14" stroke-width="3.800" stroke-linecap="round" d="M20 32q4.500-13 9 0M41 32q4.500-13 9 0M19 44q16 13 32 0"/></symbol>
  <symbol id="em-flat" viewBox="0 0 70 70"><circle cx="35" cy="35" r="34" fill="url(#g-face)" stroke="#e09c3c" stroke-width="1.500"/><ellipse cx="24" cy="28" rx="4" ry="6" fill="#7b4a14"/><ellipse cx="46" cy="28" rx="4" ry="6" fill="#7b4a14"/><path stroke="#7b4a14" stroke-width="4.500" stroke-linecap="round" d="M19 46h32"/></symbol>
  <symbol id="em-sad" viewBox="0 0 70 70"><circle cx="35" cy="35" r="34" fill="url(#g-face)" stroke="#e09c3c" stroke-width="1.500"/><path fill="none" stroke="#7b4a14" stroke-width="2.800" stroke-linecap="round" d="M9 31q9-1 14-8M61 31q-9-1-14-8"/><path fill="none" stroke="#7b4a14" stroke-width="4" stroke-linecap="round" d="M13 41q8 7 16 0M41 41q8 7 16 0M29 57h12"/></symbol>
</svg>

<div class="screen">
  <div class="menubar">
    <nav class="menubar-apps">
      <svg class="apple"><use href="#apple"/></svg><b>Chrome</b><span>File</span><span>Edit</span><span>View</span><span>History</span><span>Bookmarks</span><span>Profiles</span><span>Tab</span><span>Window</span><span>Help</span>
    </nav>
    <div class="menubar-status">
      <svg class="i32"><use href="#openai"/></svg><svg class="i32"><use href="#m-burst"/></svg><svg class="i32"><use href="#m-g"/></svg><svg class="i48"><use href="#m-wd"/></svg><svg class="i40"><use href="#m-cc"/></svg><svg class="i32"><use href="#m-keys"/></svg><svg class="i32"><use href="#m-a"/></svg><svg class="i28"><use href="#m-moon"/></svg><span>77°F</span><svg class="i32"><use href="#m-1p"/></svg><svg class="i30"><use href="#m-shz"/></svg><svg class="i36"><use href="#m-list"/></svg><svg class="i32"><use href="#m-air"/></svg><svg class="i36"><use href="#m-stack"/></svg><svg class="i36"><use href="#m-disp"/></svg><svg class="i40"><use href="#m-vol"/></svg><svg class="i28"><use href="#m-acc"/></svg><svg class="i28"><use href="#m-bt"/></svg><svg class="i28"><use href="#m-play"/></svg><svg class="i30"><use href="#m-ear"/></svg><svg class="i28"><use href="#m-user"/></svg><svg class="i28"><use href="#m-time"/></svg><svg class="i24"><use href="#m-eject"/></svg><svg class="i36"><use href="#m-wifi"/></svg><svg class="i28"><use href="#m-search"/></svg><svg class="i28"><use href="#m-ctl"/></svg><svg class="i14"><use href="#m-loc"/></svg><svg class="i30"><use href="#m-siri"/></svg><span class="clock">Fri Aug 22&nbsp; 19:55</span>
    </div>
  </div>

  <div class="tabstrip">
    <div class="lights"><i class="red"></i><i class="grey"></i><i class="green"></i></div>
    <div class="tab"><svg><use href="#f-vercel"/></svg><span>Create</span><svg class="x"><use href="#x"/></svg></div>
    <div class="tab"><svg class="i28"><use href="#f-gmail"/></svg><span>ClickUp</span><svg class="x"><use href="#x"/></svg></div>
    <div class="tab"><svg><use href="#f-docs"/></svg><span>Wisdom</span><svg class="x"><use href="#x"/></svg></div>
    <div class="tab"><svg><use href="#f-docs"/></svg><span>Wisdom</span><svg class="x"><use href="#x"/></svg></div>
    <div class="tab"><svg><use href="#f-vercel"/></svg><span>Wisdom</span><svg class="x"><use href="#x"/></svg></div>
    <div class="tab"><svg class="gl"><use href="#globe"/></svg><span>Wisdom</span><svg class="x"><use href="#x"/></svg></div>
    <div class="tab"><svg><use href="#f-github"/></svg><span>Preside</span><svg class="x"><use href="#x"/></svg></div>
    <div class="tab"><svg><use href="#f-githubdark"/></svg><span>Decidin</span><svg class="x"><use href="#x"/></svg></div>
    <div class="tab"><svg><use href="#f-vercel"/></svg><span>Wisdom</span><svg class="x"><use href="#x"/></svg></div>
    <div class="tab"><svg class="gl"><use href="#globe"/></svg><span>Wisdom</span><svg class="x"><use href="#x"/></svg></div>
    <div class="tab"><svg class="gl"><use href="#globe"/></svg><span>Wisdom</span><svg class="x"><use href="#x"/></svg></div>
    <div class="tab"><svg><use href="#f-vercel"/></svg><span>Wisdom</span><svg class="x"><use href="#x"/></svg></div>
    <div class="tab"><svg class="gl"><use href="#globe"/></svg><span>Wisdom</span><svg class="x"><use href="#x"/></svg></div>
    <div class="tab narrow"><svg class="gl"><use href="#globe"/></svg><span>Wisdom</span><svg class="x"><use href="#x"/></svg></div>
    <div class="tab narrow"><svg><use href="#f-vercel"/></svg><span>Wisdom</span><svg class="x"><use href="#x"/></svg></div>
    <div class="tab narrow"><svg class="gl"><use href="#globe"/></svg><span>Wisdom</span><svg class="x"><use href="#x"/></svg></div>
    <div class="tab narrow plain"><svg><use href="#f-api"/></svg><span>API keys</span><svg class="x"><use href="#x"/></svg></div>
    <div class="tab narrow plain active"><svg class="gl"><use href="#globe"/></svg><span>Wisdom</span><svg class="x"><use href="#x"/></svg></div>
    <div class="tab narrow"><svg class="gl"><use href="#globe"/></svg><span>view-so</span><svg class="x"><use href="#x"/></svg></div>
    <svg class="newtab"><use href="#plus"/></svg>
    <div class="tabsearch"><svg><use href="#chev"/></svg></div>
  </div>

  <div class="chrome-back">
  <div class="chrome">
    <div class="toolbar">
      <div class="navbtns"><svg class="i26"><use href="#back"/></svg><svg class="i26 fwd"><use href="#back"/></svg><svg class="i26"><use href="#reload"/></svg><svg class="i28"><use href="#home"/></svg></div>
      <div class="omnibox"><div class="site"><svg><use href="#tune"/></svg></div><span class="url"><i>https://</i>wisdomos-phoenix-frontend-lm3ul8vhx-axaiinovation.vercel.app</span><svg class="star"><use href="#star"/></svg></div>
      <div class="exts">
        <svg><use href="#e-vlc"/></svg>
        <div class="ext-count"><svg><use href="#e-hub"/></svg><b>9</b></div>
        <svg><use href="#e-keys"/></svg><svg><use href="#e-bot"/></svg><svg><use href="#e-gauge"/></svg><svg><use href="#e-fox"/></svg><svg><use href="#e-gpt"/></svg><svg><use href="#e-1p"/></svg><svg><use href="#e-pdf"/></svg><svg><use href="#e-puzzle"/></svg>
      </div>
      <i class="vsep"></i>
      <div class="profile"><b>P</b><span>Work</span></div>
      <div class="kebab"><i></i><i></i><i></i></div>
    </div>
    <div class="bookmarks">
      <svg class="apps"><use href="#b-grid"/></svg><i class="vsep"></i>
      <span><svg><use href="#b-search"/></svg>Suggested Sites</span>
      <span><svg><use href="#b-fly"/></svg>Web Slice Gallery</span>
      <span><svg class="gl"><use href="#globe"/></svg>Éditeur officiel du...</span>
      <span><svg class="gl"><use href="#globe"/></svg>Gmail</span>
      <span><svg><use href="#b-yt"/></svg>YouTube</span>
      <span><svg><use href="#b-map"/></svg>Maps</span>
      <span><svg><use href="#b-nato"/></svg>NATO - Official tex...</span>
      <span><svg class="gl"><use href="#globe"/></svg>Problems of U.S. F...</span>
      <span><svg class="gl"><use href="#globe"/></svg>The European Cris...</span>
      <span><svg class="gl"><use href="#globe"/></svg>Director of Nation...</span>
      <span><svg class="gl"><use href="#globe"/></svg>Partnership for Pe...</span>
      <span><svg class="gl"><use href="#globe"/></svg>Nuremberg Trials -...</span>
      <span><svg class="gl"><use href="#globe"/></svg>NATO - Declassifie...</span>
      <span><svg><use href="#b-j"/></svg>Perestroika as Rev...</span>
      <svg class="more"><use href="#b-more"/></svg><i class="vsep"></i>
      <span class="all"><svg><use href="#b-folder"/></svg>All Bookmarks</span>
    </div>
  </div>
  </div>

  <div class="page">
    <header class="topnav">
      <div class="halo"><svg class="bird"><use href="#phoenix"/></svg></div>
      <div class="brand"><strong>WisdomOS</strong><span>Rise into Fulfillment</span></div>
      <a class="signin">Sign In</a>
      <a class="cta">Get Started</a>
      <a class="item current"><svg class="ic"><use href="#l-home"/></svg>Dashboard</a>
      <a class="item tight"><svg class="ic c24"><use href="#l-layers"/></svg><span>Integrated<br>Display</span></a>
      <a class="item mid"><svg class="ic c28"><use href="#l-sparkles"/></svg><span>Phoenix<br>Tools</span><svg class="ic c18"><use href="#chev"/></svg></a>
      <a class="item mid areas"><svg class="ic c28"><use href="#l-target"/></svg><span>Life<br>Areas</span><svg class="ic c18"><use href="#chev"/></svg></a>
      <a class="item"><svg class="ic"><use href="#l-trend"/></svg><span>Insights</span><svg class="ic c30"><use href="#chev"/></svg></a>
      <a class="item"><svg class="ic"><use href="#l-book"/></svg><span>Resources</span><svg class="ic c30"><use href="#chev"/></svg></a>
      <a class="item"><svg class="ic"><use href="#l-gear"/></svg><span>Settings</span></a>
    </header>

    <header class="subnav">
      <div class="halo"><svg class="bird"><use href="#phoenix"/></svg></div>
      <div class="brand"><strong>WisdomOS</strong><span>Rise into Fulfillment</span></div>
      <div class="actions">
        <button><svg class="ic"><use href="#plus"/></svg>Journal</button>
        <button><svg class="ic"><use href="#l-target"/></svg>Commitments</button>
        <button><svg class="ic"><use href="#l-refresh"/></svg>Reset Ritual</button>
        <button><svg class="ic"><use href="#l-map"/></svg>Fulfillment Display</button>
        <button class="hot"><svg class="ic"><use href="#l-award"/></svg>Badges</button>
      </div>
    </header>

    <main>
      <section class="panel pulse">
        <i class="spark s1"></i><i class="spark s2"></i>
        <div class="embers"><i></i><i></i><i></i><i></i><i></i></div>
        <h2>Today's Pulse</h2>
        <div class="mood"><p>How are you feeling today?</p>
          <div class="face"><svg><use href="#em-happy"/></svg></div><div class="face on"><svg><use href="#em-flat"/></svg></div><div class="face"><svg><use href="#em-sad"/></svg></div>
        </div>
      </section>

      <section class="panel cycle">
        <div class="row"><h2>Your Phoenix Cycle</h2><div class="phase"><svg class="ic"><use href="#l-trend"/></svg>Fire</div></div>
        <div class="meter"><div style="width:40%"></div></div>
        <p>You're in the fire of transformation. Trust the process.</p>
      </section>

      <div class="areas-head"><h1>Life Areas</h1>
        <div class="legend"><span><svg><use href="#dot-green"/></svg>Thriving</span><span><svg><use href="#dot-yellow"/></svg>Attention</span><span><svg><use href="#dot-red"/></svg>Breakdown</span></div>
      </div>

      <div class="areas-grid">
        <article class="area amber"><div class="head"><div class="tile"><svg class="ic"><use href="#l-bag"/></svg></div><div class="name"><h3>Work &amp; Purpose</h3><em>Your Sacred Fire</em></div><svg class="dot"><use href="#dot-yellow"/></svg></div><div class="bar"><div style="width:50%"></div></div><div class="score"><span>Score: 0</span></div><ul><li>Morning meditation completed</li><li>Boundary reset with client</li></ul></article>
        <article class="area amber"><div class="head"><div class="tile"><svg class="ic"><use href="#l-pulse"/></svg></div><div class="name"><h3>Health &amp; Recovery</h3><em>Your Inner Flame</em></div><svg class="dot"><use href="#dot-yellow"/></svg></div><div class="bar"></div><div class="score"><span>Score: -2</span><span>Broken: 1</span></div><ul><li>Morning meditation completed</li><li>Boundary reset with client</li></ul></article>
        <article class="area rose"><div class="head"><div class="tile"><svg class="ic"><use href="#l-dollar"/></svg></div><div class="name"><h3>Finance</h3><em>Your Golden Wings</em></div><svg class="dot"><use href="#dot-red"/></svg></div><div class="bar"></div><div class="score"><span>Score: -2</span><span>Upsets: 1</span></div><ul><li>Morning meditation completed</li><li>Boundary reset with client</li></ul></article>
        <article class="area rose"><div class="head"><div class="tile"><svg class="ic"><use href="#l-heart"/></svg></div><div class="name"><h3>Intimacy &amp; Love</h3><em>Your Heart's Ember</em></div><svg class="dot"><use href="#dot-red"/></svg></div><div class="bar"><div style="width:75%"></div></div><div class="score"><span>Score: +1</span><span>Upsets: 1</span><span>Broken: 1</span></div><ul><li>Morning meditation completed</li><li>Boundary reset with client</li></ul></article>
        <article class="area rose"><div class="head"><div class="tile"><svg class="ic"><use href="#l-clock"/></svg></div><div class="name"><h3>Time &amp; Energy</h3><em>Your Life Force</em></div><svg class="dot"><use href="#dot-red"/></svg></div><div class="bar"><div style="width:50%"></div></div></article>
        <article class="area rose"><div class="head"><div class="tile"><svg class="ic"><use href="#l-sparkles"/></svg></div><div class="name"><h3>Spiritual Alignment</h3><em>Your Divine Spark</em></div><svg class="dot"><use href="#dot-red"/></svg></div><div class="bar"><div style="width:75%"></div></div></article>
        <article class="area rose"><div class="head"><div class="tile"><svg class="ic"><use href="#l-palette"/></svg></div><div class="name"><h3>Creativity &amp; Expression</h3><em>Your Creative Flame</em></div><svg class="dot"><use href="#dot-red"/></svg></div></article>
        <article class="area sage"><div class="head"><div class="tile"><svg class="ic"><use href="#l-users"/></svg></div><div class="name"><h3>Friendship &amp; Community</h3><em>Your Circle of Fire</em></div><svg class="dot"><use href="#dot-green"/></svg></div></article>
      </div>
    </main>
  </div>
  <button class="quick"><svg class="ic"><use href="#plus"/></svg>Quick Journal</button>
</div>
</body>
</html>
```
FILE: styles.css
```css
* { box-sizing: border-box; }
html, body { margin: 0; overflow: hidden; }
body { font-family: Inter, "Liberation Sans", sans-serif; color: #000; background: #fff; }
h1, h2, h3, p, ul { margin: 0; padding: 0; }
svg { display: block; flex: none; }
.sprite { position: absolute; width: 0; height: 0; }
.screen { position: relative; width: 4480px; height: 2520px; zoom: 0.9142857; overflow: hidden; }

.i14 { width: 14px; height: 14px; } .i24 { width: 24px; height: 24px; } .i26 { width: 26px; height: 26px; }
.i28 { width: 28px; height: 28px; } .i30 { width: 30px; height: 30px; } .i32 { width: 32px; height: 32px; }
.i36 { width: 36px; height: 30px; } .i40 { width: 40px; height: 28px; } .i48 { width: 48px; height: 28px; }

/* system menu bar */
.menubar { height: 48px; background: #000; color: #fff; display: flex; font-size: 26px; font-weight: 500; letter-spacing: -.5px; }
.menubar-apps { width: 2304px; padding-left: 39px; display: grid; align-items: center;
  grid-template-columns: 69px 141px 84px 89px 100px 128px 177px 131px 83px 140px 100px; }
.apple { width: 30px; height: 32px; margin-top: -4px; }
.menubar-apps span, .menubar-apps b { padding-bottom: 3px; }
.menubar-status { color: #e6e6e6; display: grid; align-items: center; justify-items: start;
  grid-template-columns: 66px 69px 79px 77px 76px 65px 68px 40px 88px 80px 85px 70px 83px 84px 74px 69px 66px 65px 66px 64px 70px 77px 76px 70px 58px 27px 47px 70px 240px; }
.menubar-status svg { justify-self: start; margin-left: 22px; translate: -50% 0; }
.menubar-status span { padding-bottom: 3px; color: #fff; font-weight: 400; white-space: nowrap; }
.menubar-status .clock { letter-spacing: -.1px; }

/* browser tabs */
.tabstrip { height: 82px; background: #12211f; display: flex; align-items: center; color: #b6cac6; }
.lights { width: 150.6px; padding-left: 25.5px; display: flex; gap: 16px; flex: none; }
.lights i { width: 24px; height: 24px; border-radius: 50%; }
.lights .red { background: #ec6a5e; } .lights .grey { background: #35413f; } .lights .green { background: #61c554; }
.tab { position: relative; width: 215.9px; height: 82px; padding: 2px 0 0 22px; flex: none; display: flex; align-items: center; font-size: 24px; font-weight: 500; }
.tab.narrow { width: 214.1px; }
.tab > svg { width: 32px; height: 32px; }
.tab > svg.gl { width: 28px; height: 28px; margin: 0 2px; color: #9aa0a3; }
.tab span { width: 75px; margin: 0 25px 0 15.5px; white-space: nowrap; -webkit-mask-image: linear-gradient(90deg, #000 60%, transparent); mask-image: linear-gradient(90deg, #000 60%, transparent); }
.tab > svg.x { width: 16px; height: 16px; }
.tab::after { content: ""; position: absolute; right: -2px; top: 26px; width: 4px; height: 32px; border-radius: 2px; background: #2d3e3c; }
.tab.plain::after { display: none; }
.tab.active { color: #e6eeec; z-index: 0; }
.tab.active::before { content: ""; position: absolute; z-index: -1; left: 6px; right: 6px; top: 14px; bottom: 0; border-radius: 20px 20px 0 0; background: #2d3e3c; }
.tab.active::after { display: block; z-index: -1; left: -18px; right: -18px; top: 58px; width: auto; height: 24px; border-radius: 0;
  background: radial-gradient(circle at 0 0, transparent 23.5px, #2d3e3c 24px) left / 24px 24px no-repeat, radial-gradient(circle at 100% 0, transparent 23.5px, #2d3e3c 24px) right / 24px 24px no-repeat; }
.newtab { width: 34px; height: 34px; margin-left: 17px; color: #d0dfdc; }
.tabsearch { width: 55px; height: 56px; margin: 2px 0 0 119px; border-radius: 18px; background: #2d3e3c; display: grid; place-items: center; color: #e0e8e6; }
.tabsearch svg { width: 30px; height: 30px; }

/* toolbar and bookmarks */
.chrome-back { background: #12211f; }
.chrome { height: 162px; background: #2d3e3c; border-radius: 16px 16px 0 0; border-bottom: 2.300px solid #434846; color: #c8d5d2; }
.toolbar { height: 92px; display: flex; align-items: center; }
.navbtns { display: flex; align-items: center; gap: 46px; padding-left: 31px; width: 312px; }
.navbtns .fwd { transform: scaleX(-1); color: #6f7e7b; }
.omnibox { width: 3146px; height: 68px; border-radius: 34px; background: #182826; display: flex; align-items: center; padding: 0 32px 0 10px; }
.site { width: 48px; height: 48px; border-radius: 50%; background: #2d3e3c; display: grid; place-items: center; }
.site svg { width: 26px; height: 24px; }
.url { flex: 1; margin-left: 17px; font-size: 28px; letter-spacing: -.085px; color: #e3e9e8; }
.url i { font-style: normal; color: #c3cecc; }
.star { width: 34px; height: 34px; }
.exts { width: 716px; height: 68px; margin-left: 18.500px; border: 2.300px solid #777c79; border-radius: 34px; display: flex; align-items: center; gap: 40px; padding-left: 16px; }
.exts > svg { width: 32px; height: 32px; }
.ext-count { position: relative; width: 32px; height: 32px; }
.ext-count svg { width: 44px; height: 48px; }
.ext-count b { position: absolute; left: 16px; top: 16px; width: 28px; height: 28px; border-radius: 8px; background: #1f2826; color: #fff; font-size: 20px; line-height: 28px; text-align: center; }
.vsep { width: 3px; height: 32px; background: #465553; flex: none; }
.toolbar .vsep { margin: 0 20px 0 18px; }
.profile { width: 158px; height: 68px; border-radius: 34px; background: #1f4e48; display: flex; align-items: center; padding-left: 18px; gap: 12px; font-size: 27px; font-weight: 500; letter-spacing: -.9px; color: #cfe6e1; }
.profile b { width: 40px; height: 40px; border-radius: 50%; background: #729f45; color: #fff; text-align: center; line-height: 40px; font-size: 24px; font-weight: 400; }
.kebab { margin-left: 42px; display: grid; gap: 8px; }
.kebab i { width: 6px; height: 6px; border-radius: 50%; background: #c8d5d2; }
.bookmarks { height: 68px; padding-left: 26px; display: grid; align-items: center; font-size: 24px; font-weight: 400; color: #c4cecc; letter-spacing: -.1px;
  grid-template-columns: 58.5px 31.5px 262px 274px 308px 141.500px 172.500px 137.500px 307.500px 308px 308px 308.500px 308.500px 308.500px 307px 584.500px 55px 33px 220px; }
.bookmarks span { display: flex; align-items: center; gap: 12px; white-space: nowrap; }
.bookmarks span svg { width: 32px; height: 32px; }
.bookmarks span svg.gl { width: 28px; height: 28px; margin: 0 2px; color: #bcc3c2; }
.bookmarks .apps { width: 28px; height: 28px; }
.bookmarks .more { width: 20px; height: 18px; }
.bookmarks span.all { gap: 18px; }

/* page headers */
.page { height: 2228px; background: #fff; }
.ic { width: 40px; height: 40px; fill: none; stroke: #000; stroke-width: 2; stroke-linecap: round; stroke-linejoin: round; }
.c18 { width: 18px; height: 18px; } .c24 { width: 25px; height: 25px; } .c28 { width: 28px; height: 28px; } .c30 { width: 30px; height: 30px; }
.topnav { height: 162px; padding-left: 700px; border-bottom: 2.300px solid #fff3d0; display: grid; align-items: center; font-size: 35px; line-height: 50px; font-weight: 500;
  grid-template-columns: 169.500px 298px 149.500px 251px 375px 319.500px 336px 297px 330px 376px 300px; }
.halo { display: flex; align-items: center; height: 160px; background: radial-gradient(circle at 75px 80px, #fffcee, #fffef8 55px, #ffffff00 95px); }
.bird { width: 120px; height: 150px; margin: 6px 0 0 25px; }
.brand { display: flex; flex-direction: column; font-size: 30px; font-weight: 400; line-height: 40px; }
.brand strong { font-size: 50px; line-height: 70px; font-weight: 700; align-self: start; color: transparent; background: linear-gradient(90deg, #d6484c, #f0955a); -webkit-background-clip: text; background-clip: text; }
.topnav .brand { height: 150px; margin-top: 1px; }
.topnav .brand span { width: 200px; }
.signin { width: 103px; text-align: center; padding-top: 2px; }
.cta { width: 202px; height: 140px; padding: 20px; border-radius: 20px; background: #f0955a; text-align: center; }
.item { display: flex; align-items: center; gap: 20px; padding-top: 2px; }
.item.tight { gap: 19px; }
.item.current { width: 324px; height: 90px; padding-left: 40px; border-radius: 20px; background: #fffae9; gap: 21px; }
.item.mid { gap: 31px; text-align: center; }
.subnav { height: 206px; padding: 0 744px 0 731px; border-bottom: 2.300px solid #e5e5ea; display: flex; align-items: center; }
.subnav .halo { width: 173px; height: 204px; background: radial-gradient(circle at 73px 100px, #fffdf4, #fffefb 60px, #ffffff00 72px); }
.subnav .bird { width: 112px; height: 140px; margin: 8px 0 0 20px; opacity: .85; }
.subnav .brand { flex: 1; margin-top: 2px; }
.subnav .brand strong { font-size: 60px; line-height: 77px; background-image: linear-gradient(90deg, #d6484c, #f0955a 50%, #f7d148); }
.actions { display: flex; align-items: center; gap: 40px; margin-top: 1px; }
button { font: inherit; color: #000; }
.actions button { height: 124px; padding: 15px 30px 15px 29.500px; border: 2.300px solid #d1d5db; border-radius: 30px; background: #fff; font-size: 35px; line-height: 50px; font-weight: 600; text-align: left; }
.actions button.hot { height: 120px; border: 0; background: linear-gradient(90deg, #d6484c, #f0955a); padding: 15px 30px; }

/* dashboard */
main { padding: 80px 744px 0; }
.panel { position: relative; border-radius: 40px; background: #fff; padding: 62px; box-shadow: 0 20px 80px rgba(31, 38, 135, .37); }
.pulse { height: 364px; }
.cycle { margin-top: 80px; height: 348px; background: #fefefe; }
h2 { font-size: 50px; line-height: 70px; font-weight: 600; }
.spark { position: absolute; width: 12px; height: 12px; border-radius: 50%; background: #f5a878; filter: blur(1.5px); }
.s1 { left: 2239px; top: 34px; } .s2 { right: 13px; top: 26px; }
.embers { position: absolute; left: 53px; top: 193px; display: flex; gap: 4.500px; }
.embers i { width: 8px; height: 8px; border-radius: 50%; background: #f0955a; opacity: .3; }
.embers i:nth-child(2) { opacity: 1; } .embers i:nth-child(3) { opacity: .5; } .embers i:nth-child(4) { opacity: .45; }
.mood { display: flex; align-items: center; margin-top: 36px; }
.mood p { font-size: 40px; width: 570px; }
.face { width: 123px; height: 138px; margin-right: 32px; border-radius: 25px; display: grid; place-items: center; padding-bottom: 2px; }
.face svg { width: 70px; height: 70px; }
.face.on { border: 4.500px solid #f0955a; background: #fce9de; }
.row { display: flex; justify-content: space-between; align-items: center; height: 75px; }
.phase { width: 187px; height: 75px; border: 2.300px solid #6b6b45; border-radius: 38px; background: linear-gradient(135deg, #1f3258, #304050); display: flex; align-items: center; gap: 19px; padding-left: 30px; font-size: 35px; font-weight: 500; }
.meter { height: 30px; margin-top: 39px; border-radius: 15px; background: #bfc4c8; overflow: hidden; }
.meter div { height: 100%; background: linear-gradient(90deg, #2c3e50, #d6484c 33%, #f0955a 66%, #f7d148); }
.cycle p { margin-top: 31px; font-size: 35px; line-height: 50px; font-style: italic; }
.areas-head { height: 80px; margin: 80px 0 60px; display: flex; align-items: center; justify-content: space-between; }
h1 { font-size: 60px; line-height: 80px; font-weight: 600; }
.legend { display: flex; gap: 20px; font-size: 35px; padding-top: 1px; }
.legend span { display: flex; align-items: center; gap: 9px; }
.legend svg { width: 36px; height: 36px; margin-top: -2px; }
.areas-grid { display: grid; grid-template-columns: repeat(4, 703px); grid-auto-rows: 500px; gap: 60px; padding-top: .5px; }
.area { border-radius: 40px; padding: 51.500px; border: 2.300px solid rgba(255, 255, 255, .3); background-origin: border-box; box-shadow: 0 20px 80px rgba(31, 38, 135, .37); }
.amber { background-image: linear-gradient(135deg, #e2dad4, #e9e1dd 35%, #ebe7df 60%, #f3eeeb); }
.rose { background-image: linear-gradient(135deg, #e3d3d3, #eadddc 45%, #f4eae9); }
.sage { background-image: linear-gradient(135deg, #d2dbd4, #dde4de 45%, #eaefeb); }
.head { display: flex; align-items: center; }
.tile { width: 90px; height: 90px; margin-right: 30.500px; border-radius: 20px; background: rgba(255, 255, 255, .08); display: grid; place-items: center; flex: none; }
.tile .ic { width: 50px; height: 50px; }
.name { flex: 1; display: flex; flex-direction: column; }
h3 { font-size: 40px; line-height: 60px; font-weight: 600; }
.name em { font-size: 30px; line-height: 40px; }
.dot { width: 60px; height: 60px; align-self: flex-start; margin-top: 10px; }
.bar { height: 20px; margin-top: 40px; border-radius: 10px; background: rgba(44, 62, 80, .3); overflow: hidden; }
.bar div { height: 100%; background: linear-gradient(90deg, #e05550, #d0454b); }
.amber .bar div { background: linear-gradient(90deg, #e8a33d, #f0955a); }
.score { display: flex; justify-content: space-between; margin-top: 30px; font-size: 35px; line-height: 50px; }
.score span + span { color: #454343; }
ul { list-style: none; margin-top: 30px; padding-top: 30px; border-top: 2.300px solid rgba(255, 255, 255, .1); display: grid; gap: 10px; font-size: 30px; line-height: 40px; }
li { display: flex; align-items: center; gap: 20px; }
li::before { content: ""; width: 10px; height: 10px; border-radius: 50%; background: #f0955a; }
.quick { position: absolute; left: 3973.500px; top: 2268px; width: 451px; height: 194px; padding: 0 0 0 72px; border: 0; border-radius: 30px; background: linear-gradient(90deg, #d95a5f, #e0695f 22%, #f2a26b); box-shadow: 0 20px 50px -10px rgba(240, 149, 90, .4); text-align: left; font-size: 45px; line-height: 70px; font-weight: 600; letter-spacing: .4px; }
.quick .ic { width: 50px; height: 50px; }
```
